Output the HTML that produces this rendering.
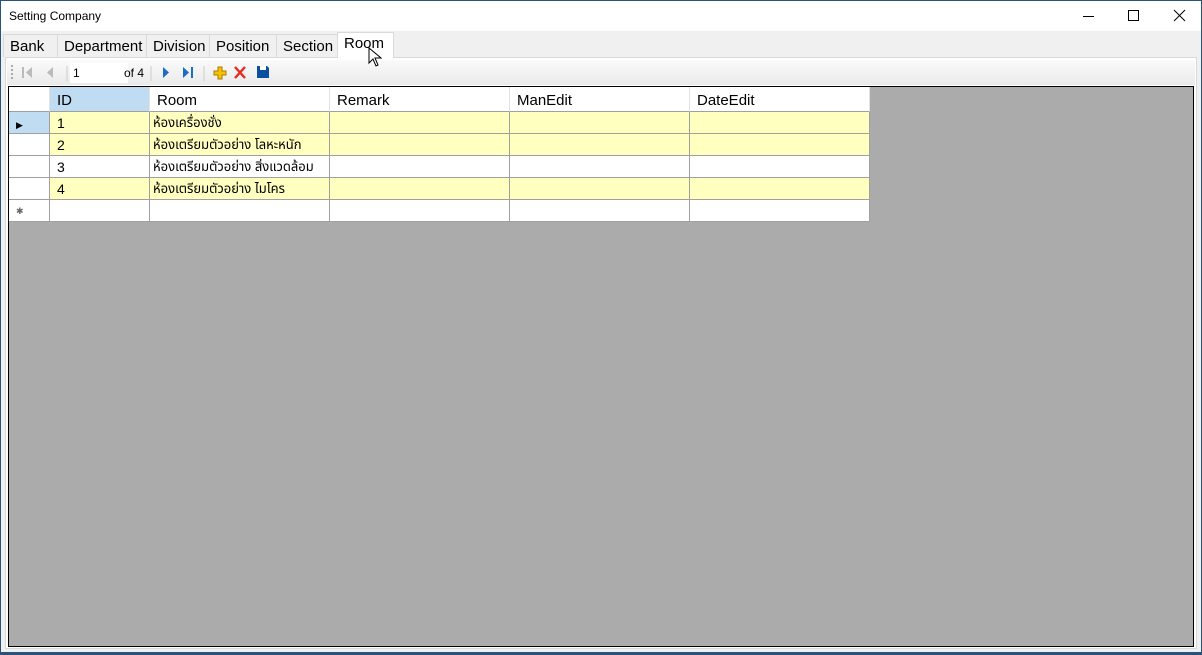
<!DOCTYPE html>
<html><head><meta charset="utf-8"><style>
*{margin:0;padding:0;box-sizing:border-box}
body{width:1202px;height:655px;overflow:hidden;background:#f0f0f0;font-family:"Liberation Sans","Noto Sans Thai","DejaVu Sans",sans-serif;position:relative}
.a{position:absolute}
.win{left:0;top:0;width:1202px;height:655px;border:1px solid #2b5279;border-bottom:3px solid #2b5279}
.title{left:1px;top:1px;width:1200px;height:30px;background:#fff;font-size:12px;color:#000}
.tab{top:34px;height:23px;border:1px solid #d9d9d9;border-bottom:none;background:#f0f0f0;font-size:15px;line-height:24px;padding-left:6px;color:#000}
.sel{top:32px;height:26px;background:#fff;border-color:#d9d9d9;z-index:2;line-height:22px}
.page{left:5px;top:57px;width:1192px;height:592px;border:1px solid #d9d9d9;background:#fff}
.tb{left:7px;top:60px;width:1188px;height:25px;background:linear-gradient(#fafafa,#eaeaea)}
.grid{left:8px;top:86px;width:1186px;height:561px;background:#ababab;border:1px solid #000}
.c{position:absolute;border-right:1px solid #a0a0a0;border-bottom:1px solid #a0a0a0;font-size:14px;padding-left:7px;line-height:22px;height:22px}
.th{background:#fff;font-size:15px;line-height:28px;height:25px;border-right:1px solid #e3e3e3;border-bottom:1px solid #a0a0a0}
.y{background:#ffffc0}
.w{background:#fff}
.t{font-size:13px;padding-left:3px}
</style></head><body>
<div class="a win"></div>
<div class="a title"><span class="a" style="left:8px;top:8px">Setting Company</span>
<svg class="a" style="left:1078px;top:8px" width="110" height="14"><path d="M4 7.5h11" stroke="#000"/><rect x="49.5" y="1.5" width="10" height="10" fill="none" stroke="#000"/><path d="M95 1l11 11M106 1L95 12" stroke="#000"/></svg></div>
<div class="a tab" style="left:3px;width:55px">Bank</div>
<div class="a tab" style="left:57px;width:90px">Department</div>
<div class="a tab" style="left:146px;width:64px">Division</div>
<div class="a tab" style="left:209px;width:68px">Position</div>
<div class="a tab" style="left:276px;width:62px">Section</div>
<div class="a page"></div>
<div class="a tab sel" style="left:337px;width:57px">Room</div>
<div class="a tb"></div>
<svg class="a" style="left:8px;top:62px;z-index:3" width="270" height="22">
<g fill="#aaa"><rect x="3" y="3" width="2" height="2"/><rect x="3" y="7" width="2" height="2"/><rect x="3" y="11" width="2" height="2"/><rect x="3" y="15" width="2" height="2"/></g>
<path d="M15 5v11" stroke="#bbb" stroke-width="2"/><path d="M24 5l-6 5.5 6 5.5z" fill="#bbb"/><path d="M45 5l-6 5.5 6 5.5z" fill="#bbb"/>
<path d="M59 4v15" stroke="#ccc"/><rect x="62" y="1" width="58" height="20" fill="#fff"/>
<text x="65" y="15" font-size="12" font-family="Liberation Sans">1</text><text x="116" y="15" font-size="12" font-family="Liberation Sans">of 4</text>
<path d="M143 4v15" stroke="#ccc"/>
<path d="M155 5l6 5.5-6 5.5z" fill="#1e6bc8"/><path d="M175 5l6 5.5-6 5.5z" fill="#1e6bc8"/><path d="M184 5v11" stroke="#1e6bc8" stroke-width="2"/>
<path d="M196 4v15" stroke="#ccc"/>
<path d="M206 9h4v-4h4v4h4v4h-4v4h-4v-4h-4z" fill="#f5c400" stroke="#b07800"/>
<path d="M227 5l10 11M237 5l-10 11" stroke="#e8281e" stroke-width="2.4"/>
<path d="M249 4h10l2 2v10h-12z" fill="#0b4fa0"/><rect x="252" y="4" width="6" height="4" fill="#fff"/>
</svg>
<div class="a grid">
<div class="c th" style="left:0;top:0;width:41px"></div>
<div class="c th" style="left:41px;top:0;width:100px;background:#bfdcf3">ID</div>
<div class="c th" style="left:141px;top:0;width:180px">Room</div>
<div class="c th" style="left:321px;top:0;width:180px">Remark</div>
<div class="c th" style="left:501px;top:0;width:180px">ManEdit</div>
<div class="c th" style="left:681px;top:0;width:180px">DateEdit</div>
</div>
<div class="a" style="left:9px;top:112px;z-index:4">
<div class="c" style="left:0;top:0;width:41px;background:#bfdcf3"><span style="font-size:9px">&#9654;</span></div>
<div class="c y" style="left:41px;top:0;width:100px">1</div>
<div class="c y t" style="left:141px;top:0;width:180px">ห้องเครื่องชั่ง</div>
<div class="c y" style="left:321px;top:0;width:180px"></div><div class="c y" style="left:501px;top:0;width:180px"></div><div class="c y" style="left:681px;top:0;width:180px"></div>
<div class="c w" style="left:0;top:22px;width:41px"></div>
<div class="c y" style="left:41px;top:22px;width:100px">2</div>
<div class="c y t" style="left:141px;top:22px;width:180px">ห้องเตรียมตัวอย่าง โลหะหนัก</div>
<div class="c y" style="left:321px;top:22px;width:180px"></div><div class="c y" style="left:501px;top:22px;width:180px"></div><div class="c y" style="left:681px;top:22px;width:180px"></div>
<div class="c w" style="left:0;top:44px;width:41px"></div>
<div class="c w" style="left:41px;top:44px;width:100px">3</div>
<div class="c w t" style="left:141px;top:44px;width:180px">ห้องเตรียมตัวอย่าง สิ่งแวดล้อม</div>
<div class="c w" style="left:321px;top:44px;width:180px"></div><div class="c w" style="left:501px;top:44px;width:180px"></div><div class="c w" style="left:681px;top:44px;width:180px"></div>
<div class="c w" style="left:0;top:66px;width:41px"></div>
<div class="c y" style="left:41px;top:66px;width:100px">4</div>
<div class="c y t" style="left:141px;top:66px;width:180px">ห้องเตรียมตัวอย่าง ไมโคร</div>
<div class="c y" style="left:321px;top:66px;width:180px"></div><div class="c y" style="left:501px;top:66px;width:180px"></div><div class="c y" style="left:681px;top:66px;width:180px"></div>
<div class="c w" style="left:0;top:88px;width:41px;font-size:9px;color:#666">&#10033;</div>
<div class="c w" style="left:41px;top:88px;width:100px"></div><div class="c w" style="left:141px;top:88px;width:180px"></div><div class="c w" style="left:321px;top:88px;width:180px"></div><div class="c w" style="left:501px;top:88px;width:180px"></div><div class="c w" style="left:681px;top:88px;width:180px"></div>
</div>
<svg class="a" style="left:368px;top:47px;z-index:5" width="14" height="21"><path d="M1 1v15l4-4 3 7 2-1-3-7h6z" fill="#fff" stroke="#000"/></svg>
</body></html>
